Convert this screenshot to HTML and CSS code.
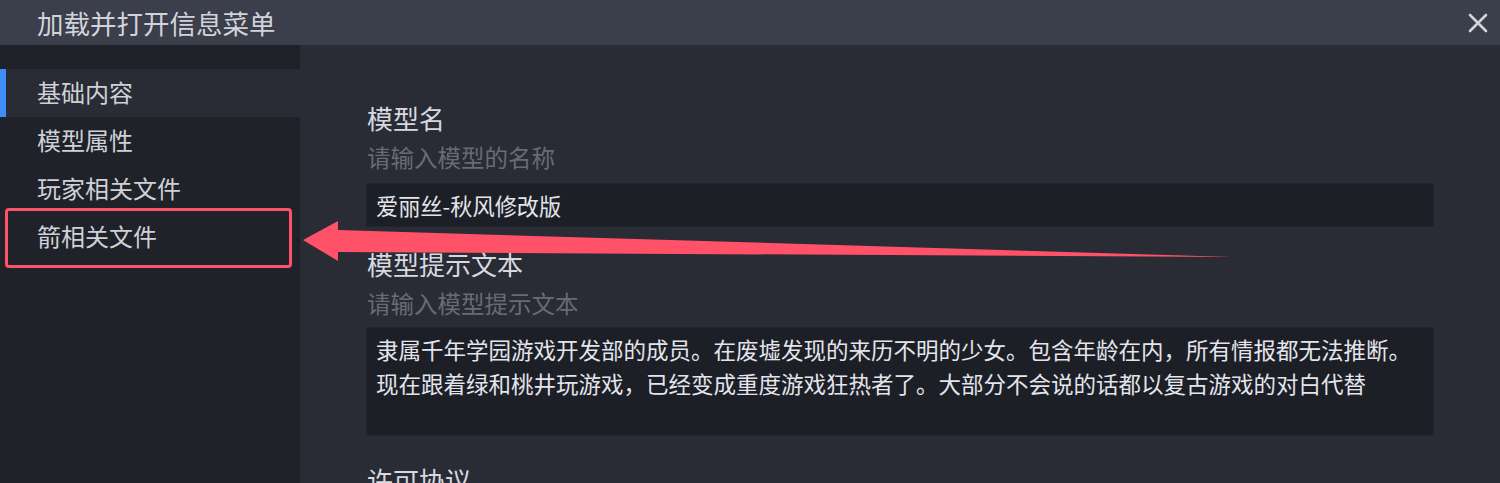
FILE: index.html
```html
<!DOCTYPE html>
<html lang="zh-CN">
<head>
<meta charset="utf-8">
<title>加载并打开信息菜单</title>
<link rel="stylesheet" href="styles.css">
</head>
<body>
<div class="window">
  <header class="titlebar">
    <span class="title">加载并打开信息菜单</span>
    <button class="close" aria-label="关闭">
      <svg width="20" height="20" viewBox="0 0 20 20"><path d="M2 2L18 18M18 2L2 18" stroke="#d4d5dc" stroke-width="2.6" stroke-linecap="round"/></svg>
    </button>
  </header>
  <div class="body">
    <nav class="sidebar">
      <div class="nav-top"></div>
      <div class="nav-item active">基础内容</div>
      <div class="nav-item">模型属性</div>
      <div class="nav-item">玩家相关文件</div>
      <div class="nav-item">箭相关文件</div>
    </nav>
    <main class="content">
      <section class="field">
        <div class="label">模型名</div>
        <div class="hint">请输入模型的名称</div>
        <div class="input">爱丽丝-秋风修改版</div>
      </section>
      <section class="field">
        <div class="label">模型提示文本</div>
        <div class="hint">请输入模型提示文本</div>
        <div class="textarea">隶属千年学园游戏开发部的成员。在废墟发现的来历不明的少女。包含年龄在内，所有情报都无法推断。<br>现在跟着绿和桃井玩游戏，已经变成重度游戏狂热者了。大部分不会说的话都以复古游戏的对白代替</div>
      </section>
      <section class="field field-last">
        <div class="label">许可协议</div>
      </section>
    </main>
  </div>
  <div class="highlight"></div>
  <svg class="arrow" width="1500" height="483" viewBox="0 0 1500 483">
    <path d="M303 240 L338 221 L338 230 L1233 257 L338 252 L338 261 Z" fill="#ff5268"/>
  </svg>
</div>
</body>
</html>
```
FILE: styles.css
```css
* { box-sizing: border-box; }
html, body { margin: 0; padding: 0; }
body {
  width: 1500px;
  height: 483px;
  overflow: hidden;
  background: #292c35;
  font-family: "Noto Sans CJK SC", "Noto Sans", sans-serif;
}
.window {
  position: relative;
  width: 1500px;
  height: 483px;
  display: flex;
  flex-direction: column;
}
.titlebar {
  height: 45px;
  flex: none;
  background: #3b3e4b;
  display: flex;
  align-items: center;
  justify-content: space-between;
  padding: 0 12px 0 37px;
}
.title {
  font-size: 26.5px;
  line-height: 34px;
  color: #d2d3da;
}
.close {
  background: none;
  border: 0;
  padding: 0;
  width: 20px;
  height: 20px;
  display: flex;
}
.body {
  flex: 1;
  display: flex;
  min-height: 0;
}
.sidebar {
  width: 300px;
  flex: none;
  background: #20222a;
}
.nav-top { height: 24px; }
.nav-item {
  height: 48px;
  display: flex;
  align-items: center;
  padding-left: 37px;
  padding-bottom: 4px;
  font-size: 24px;
  color: #d0d1d8;
}
.nav-item.active {
  background: #292c35;
  box-shadow: inset 6px 0 0 #3d8ef7;
}
.content {
  flex: 1;
  padding: 55px 66px 0 66px;
  background: #292c35;
}
.field { margin-bottom: 19px; }
.field:nth-child(2) { margin-bottom: 26px; }
.label {
  font-size: 26px;
  line-height: 36px;
  color: #d8d9e0;
  padding-left: 1px;
}
.hint {
  margin-top: 5px;
  font-size: 23.5px;
  line-height: 32px;
  color: #686b75;
  padding-left: 1px;
}
.input {
  margin-top: 10px;
  height: 44px;
  width: 1068px;
  background: #1d1f27;
  border: 1px solid #23252d;
  border-radius: 2px;
  padding-left: 9px;
  display: flex;
  align-items: center;
  font-size: 22.2px;
  color: #e4e5ec;
}
.textarea {
  margin-top: 8px;
  height: 109px;
  width: 1068px;
  background: #1d1f27;
  border: 1px solid #23252d;
  border-radius: 2px;
  padding: 4px 9px;
  font-size: 22.5px;
  line-height: 34px;
  color: #e4e5ec;
}
.highlight {
  position: absolute;
  left: 5px;
  top: 208px;
  width: 287px;
  height: 60px;
  border: 3.5px solid #ff5268;
  border-radius: 4px;
}
.arrow {
  position: absolute;
  left: 0;
  top: 0;
  pointer-events: none;
}
```
